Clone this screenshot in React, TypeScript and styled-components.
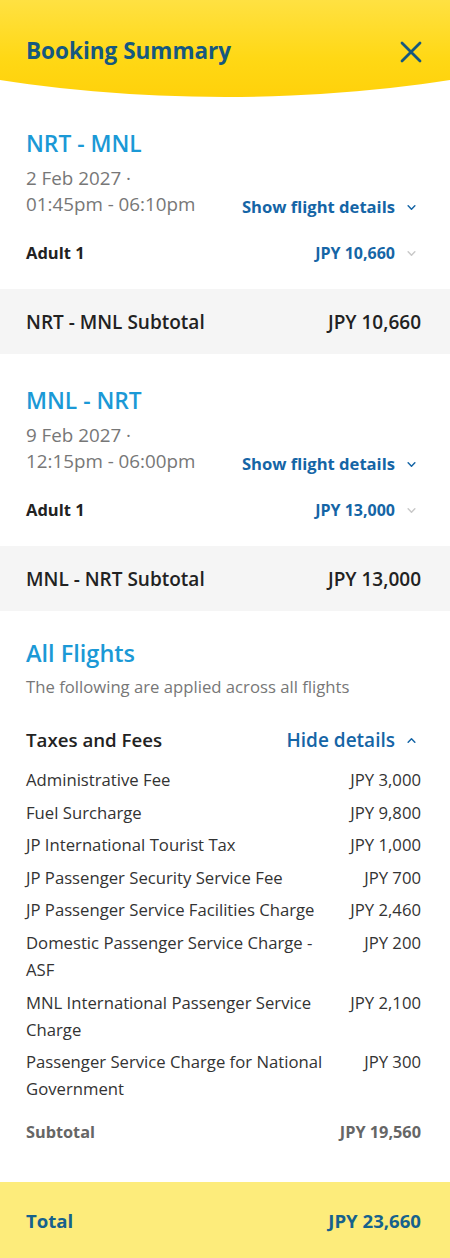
import React from "react";
import styled, { createGlobalStyle } from "styled-components";

const Global = createGlobalStyle`
  html, body { margin: 0; padding: 0; background: #ffffff; }
  body { font-family: "Open Sans", "Noto Sans", Arial, sans-serif; -webkit-font-smoothing: antialiased; }
  * { box-sizing: border-box; }
`;

const Page = styled.div`
  width: 450px;
  min-height: 1258px;
  background: #fff;
  display: flex;
  flex-direction: column;
  overflow: hidden;
`;

const Header = styled.header`
  height: 97px;
  background: linear-gradient(180deg, #ffe142 0%, #ffd815 60%, #ffd10a 100%);
  clip-path: ellipse(675px 297px at 50% -200px);
  display: flex;
  align-items: flex-start;
  justify-content: space-between;
  padding: 35px 27px 0 26px;
`;

const Title = styled.h1`
  margin: 0;
  font-size: 22.5px;
  line-height: 32px;
  font-weight: 700;
  color: #16587f;
`;

const CloseButton = styled.button`
  border: 0;
  background: transparent;
  padding: 0;
  margin-top: 5px;
  width: 24px;
  height: 24px;
  display: flex;
  align-items: center;
  justify-content: center;
  cursor: pointer;
`;

const FlightSection = styled.section`
  padding: 32px 34px 23px 26px;
  display: flex;
  flex-direction: column;
`;

const Route = styled.h2<{ $size?: number }>`
  margin: 0;
  font-size: ${(p) => p.$size ?? 22.8}px;
  line-height: 30px;
  font-weight: 600;
  color: #1b99d6;
`;

const InfoRow = styled.div`
  margin-top: 6px;
  display: flex;
  justify-content: space-between;
  align-items: flex-end;
`;

const DateText = styled.div`
  font-size: 18.8px;
  line-height: 26px;
  color: #777;
`;

const LinkButton = styled.button<{ $size?: number; $weight?: number }>`
  border: 0;
  background: transparent;
  padding: 0;
  font-family: inherit;
  font-size: ${(p) => p.$size ?? 16.6}px;
  font-weight: ${(p) => p.$weight ?? 700};
  line-height: 26px;
  color: #1565a6;
  display: flex;
  align-items: center;
  gap: 12px;
  cursor: pointer;
`;

const ShowDetails = styled(LinkButton)`
  margin-bottom: -3px;
`;

const FareRow = styled.div`
  margin-top: 23px;
  display: flex;
  justify-content: space-between;
  align-items: center;
`;

const PaxLabel = styled.div`
  font-size: 16.5px;
  line-height: 26px;
  font-weight: 700;
  color: #222;
`;

const PaxPrice = styled.div`
  font-size: 16px;
  line-height: 26px;
  font-weight: 700;
  color: #1565a6;
  display: flex;
  align-items: center;
  gap: 12px;
`;

const SubtotalBand = styled.div`
  height: 65px;
  background: #f5f5f5;
  display: flex;
  align-items: center;
  justify-content: space-between;
  padding: 0 29px 0 26px;
  font-size: 19px;
  font-weight: 600;
  color: #222;
`;

const AllSection = styled.section`
  padding: 27px 29px 38px 26px;
  display: flex;
  flex-direction: column;
`;

const SubNote = styled.div`
  margin-top: 7px;
  font-size: 16.7px;
  line-height: 24px;
  color: #777;
`;

const TaxesHeader = styled.div`
  margin-top: 27px;
  padding-right: 5px;
  display: flex;
  justify-content: space-between;
  align-items: center;
`;

const TaxesTitle = styled.div`
  font-size: 18.7px;
  line-height: 28px;
  font-weight: 600;
  color: #222;
`;

const FeeList = styled.div`
  margin-top: 12px;
  display: flex;
  flex-direction: column;
  gap: 5.6px;
`;

const FeeRow = styled.div`
  display: grid;
  grid-template-columns: 305px 1fr;
  column-gap: 10px;
  font-size: 16.7px;
  line-height: 27px;
  color: #333;
`;

const FeeAmount = styled.div`
  text-align: right;
  white-space: nowrap;
`;

const SubtotalRow = styled.div`
  margin-top: 18px;
  display: flex;
  justify-content: space-between;
  font-size: 16.3px;
  line-height: 24px;
  font-weight: 700;
  color: #666;
`;

const TotalBand = styled.div`
  flex: 1;
  min-height: 76px;
  background: #fdec7b;
  display: flex;
  justify-content: space-between;
  align-items: flex-start;
  padding: 26px 29px 0 26px;
  font-size: 18.6px;
  line-height: 26px;
  font-weight: 700;
  color: #16628c;
`;

const Chevron = ({ up, color, size = 9 }: { up?: boolean; color: string; size?: number }) => (
  <svg width={size} height={Math.round(size * 0.6)} viewBox="0 0 10 6" fill="none">
    <path
      d={up ? "M1 5L5 1L9 5" : "M1 1L5 5L9 1"}
      stroke={color}
      strokeWidth="1.8"
      strokeLinecap="round"
      strokeLinejoin="round"
    />
  </svg>
);

const CloseIcon = () => (
  <svg width="22" height="22" viewBox="0 0 22 22" fill="none">
    <path d="M2 2L20 20M20 2L2 20" stroke="#16587f" strokeWidth="2.8" strokeLinecap="round" />
  </svg>
);

type Flight = { route: string; date: string; time: string; price: string };

const flights: Flight[] = [
  { route: "NRT - MNL", date: "2 Feb 2027 ·", time: "01:45pm - 06:10pm", price: "JPY 10,660" },
  { route: "MNL - NRT", date: "9 Feb 2027 ·", time: "12:15pm - 06:00pm", price: "JPY 13,000" },
];

const fees: [string, string][] = [
  ["Administrative Fee", "JPY 3,000"],
  ["Fuel Surcharge", "JPY 9,800"],
  ["JP International Tourist Tax", "JPY 1,000"],
  ["JP Passenger Security Service Fee", "JPY 700"],
  ["JP Passenger Service Facilities Charge", "JPY 2,460"],
  ["Domestic Passenger Service Charge - ASF", "JPY 200"],
  ["MNL International Passenger Service Charge", "JPY 2,100"],
  ["Passenger Service Charge for National Government", "JPY 300"],
];

export default function App() {
  return (
    <Page>
      <Global />
      <Header>
        <Title>Booking Summary</Title>
        <CloseButton aria-label="Close">
          <CloseIcon />
        </CloseButton>
      </Header>

      {flights.map((f) => (
        <React.Fragment key={f.route}>
          <FlightSection>
            <Route>{f.route}</Route>
            <InfoRow>
              <DateText>
                {f.date}
                <br />
                {f.time}
              </DateText>
              <ShowDetails>
                Show flight details
                <Chevron color="#1565a6" />
              </ShowDetails>
            </InfoRow>
            <FareRow>
              <PaxLabel>Adult 1</PaxLabel>
              <PaxPrice>
                {f.price}
                <Chevron color="#c9c9c9" />
              </PaxPrice>
            </FareRow>
          </FlightSection>
          <SubtotalBand>
            <span>{f.route} Subtotal</span>
            <span>{f.price}</span>
          </SubtotalBand>
        </React.Fragment>
      ))}

      <AllSection>
        <Route $size={23.5}>All Flights</Route>
        <SubNote>The following are applied across all flights</SubNote>
        <TaxesHeader>
          <TaxesTitle>Taxes and Fees</TaxesTitle>
          <LinkButton $size={19} $weight={600}>
            Hide details
            <Chevron up color="#1565a6" />
          </LinkButton>
        </TaxesHeader>
        <FeeList>
          {fees.map(([label, amount]) => (
            <FeeRow key={label}>
              <div>{label}</div>
              <FeeAmount>{amount}</FeeAmount>
            </FeeRow>
          ))}
        </FeeList>
        <SubtotalRow>
          <span>Subtotal</span>
          <span>JPY 19,560</span>
        </SubtotalRow>
      </AllSection>

      <TotalBand>
        <span>Total</span>
        <span>JPY 23,660</span>
      </TotalBand>
    </Page>
  );
}
